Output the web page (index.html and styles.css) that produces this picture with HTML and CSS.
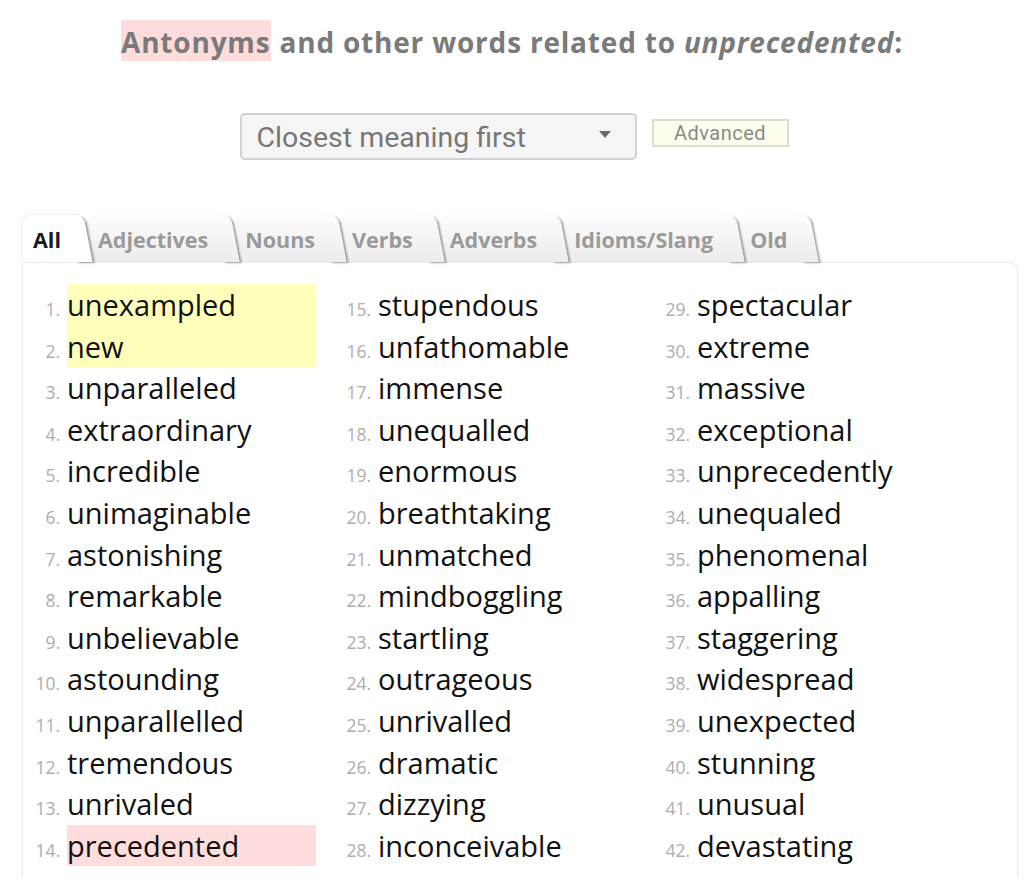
FILE: index.html
```html
<!DOCTYPE html>
<html>
<head>
<meta charset="utf-8">
<link rel="stylesheet" href="styles.css">
</head>
<body>
<h1 class="title"><span class="title-hl">Antonyms</span> and other words related to <em>unprecedented</em>:</h1>

<div class="controls">
  <div class="select">
    <span class="select-text">Closest meaning first</span>
    <span class="select-arrow"></span>
  </div>
  <div class="adv-btn">Advanced</div>
</div>

<div class="tabs">
  <div class="tab active">All</div>
  <div class="tab">Adjectives</div>
  <div class="tab">Nouns</div>
  <div class="tab">Verbs</div>
  <div class="tab">Adverbs</div>
  <div class="tab">Idioms/Slang</div>
  <div class="tab">Old</div>
</div>

<div class="panel">
  <div class="col">
    <div class="item"><span class="num">1.</span><span class="word hl-yellow">unexampled</span></div>
    <div class="item"><span class="num">2.</span><span class="word hl-yellow">new</span></div>
    <div class="item"><span class="num">3.</span><span class="word">unparalleled</span></div>
    <div class="item"><span class="num">4.</span><span class="word">extraordinary</span></div>
    <div class="item"><span class="num">5.</span><span class="word">incredible</span></div>
    <div class="item"><span class="num">6.</span><span class="word">unimaginable</span></div>
    <div class="item"><span class="num">7.</span><span class="word">astonishing</span></div>
    <div class="item"><span class="num">8.</span><span class="word">remarkable</span></div>
    <div class="item"><span class="num">9.</span><span class="word">unbelievable</span></div>
    <div class="item"><span class="num">10.</span><span class="word">astounding</span></div>
    <div class="item"><span class="num">11.</span><span class="word">unparallelled</span></div>
    <div class="item"><span class="num">12.</span><span class="word">tremendous</span></div>
    <div class="item"><span class="num">13.</span><span class="word">unrivaled</span></div>
    <div class="item"><span class="num">14.</span><span class="word hl-pink">precedented</span></div>
  </div>
  <div class="col col2">
    <div class="item"><span class="num">15.</span><span class="word">stupendous</span></div>
    <div class="item"><span class="num">16.</span><span class="word">unfathomable</span></div>
    <div class="item"><span class="num">17.</span><span class="word">immense</span></div>
    <div class="item"><span class="num">18.</span><span class="word">unequalled</span></div>
    <div class="item"><span class="num">19.</span><span class="word">enormous</span></div>
    <div class="item"><span class="num">20.</span><span class="word">breathtaking</span></div>
    <div class="item"><span class="num">21.</span><span class="word">unmatched</span></div>
    <div class="item"><span class="num">22.</span><span class="word">mindboggling</span></div>
    <div class="item"><span class="num">23.</span><span class="word">startling</span></div>
    <div class="item"><span class="num">24.</span><span class="word">outrageous</span></div>
    <div class="item"><span class="num">25.</span><span class="word">unrivalled</span></div>
    <div class="item"><span class="num">26.</span><span class="word">dramatic</span></div>
    <div class="item"><span class="num">27.</span><span class="word">dizzying</span></div>
    <div class="item"><span class="num">28.</span><span class="word">inconceivable</span></div>
  </div>
  <div class="col col3">
    <div class="item"><span class="num">29.</span><span class="word">spectacular</span></div>
    <div class="item"><span class="num">30.</span><span class="word">extreme</span></div>
    <div class="item"><span class="num">31.</span><span class="word">massive</span></div>
    <div class="item"><span class="num">32.</span><span class="word">exceptional</span></div>
    <div class="item"><span class="num">33.</span><span class="word">unprecedently</span></div>
    <div class="item"><span class="num">34.</span><span class="word">unequaled</span></div>
    <div class="item"><span class="num">35.</span><span class="word">phenomenal</span></div>
    <div class="item"><span class="num">36.</span><span class="word">appalling</span></div>
    <div class="item"><span class="num">37.</span><span class="word">staggering</span></div>
    <div class="item"><span class="num">38.</span><span class="word">widespread</span></div>
    <div class="item"><span class="num">39.</span><span class="word">unexpected</span></div>
    <div class="item"><span class="num">40.</span><span class="word">stunning</span></div>
    <div class="item"><span class="num">41.</span><span class="word">unusual</span></div>
    <div class="item"><span class="num">42.</span><span class="word">devastating</span></div>
  </div>
</div>
</body>
</html>
```

FILE: styles.css
```css
html, body {
  margin: 0;
  padding: 0;
  background: #ffffff;
}
body {
  font-family: "Open Sans", "DejaVu Sans", sans-serif;
  width: 1024px;
  height: 877px;
  overflow: hidden;
}

.title {
  margin: 0;
  padding-top: 20px;
  height: 41px;
  line-height: 43px;
  text-align: center;
  font-size: 28px;
  font-weight: 700;
  color: #7a7a7a;
  letter-spacing: 0.8px;
}
.title em {
  font-style: italic;
}
.title-hl {
  background: #ffdcdc;
  padding: 0 1px 0 0;
  display: inline-block;
  height: 41px;
  line-height: 45px;
}

.controls {
  display: flex;
  justify-content: center;
  align-items: flex-start;
  gap: 15px;
  margin-top: 52px;
  padding-left: 4px;
}
.select {
  box-sizing: border-box;
  width: 397px;
  height: 47px;
  border: 2px solid #d2d2d2;
  border-radius: 5px;
  background: #f5f5f5;
  display: flex;
  align-items: center;
  justify-content: space-between;
  padding: 0 24px 0 15px;
}
.select-text {
  font-family: Roboto, "Liberation Sans", sans-serif;
  font-size: 28.5px;
  color: #777777;
  margin-top: 2px;
}
.select-arrow {
  width: 0;
  height: 0;
  border-left: 6px solid transparent;
  border-right: 6px solid transparent;
  border-top: 7px solid #6a6a6a;
  margin-bottom: 4px;
}
.adv-btn {
  box-sizing: border-box;
  margin-top: 6px;
  width: 137px;
  height: 28px;
  border: 2px solid #dcdfd0;
  background: #fefeee;
  font-family: Roboto, "Liberation Sans", sans-serif;
  font-size: 20px;
  letter-spacing: 0.5px;
  line-height: 24px;
  color: #8a8a8a;
  text-align: center;
}

.tabs {
  display: flex;
  margin-top: 55px;
  margin-left: 22px;
  height: 47px;
  position: relative;
  z-index: 2;
}
.tab {
  position: relative;
  height: 47px;
  line-height: 50px;
  font-size: 21.5px;
  font-weight: 700;
  color: #9a9a9a;
  padding: 0 32px 0 12px;
  margin-right: -7px;
  isolation: isolate;
}
.tab::before {
  content: "";
  position: absolute;
  top: 0;
  bottom: 0;
  left: 0;
  right: 12px;
  background: linear-gradient(#fcfcfc, #ececec);
  border-radius: 9px 0 0 0;
  z-index: -1;
}
.tab::after {
  content: "";
  position: absolute;
  top: 0;
  bottom: 0;
  right: 5px;
  width: 16px;
  background: linear-gradient(#fcfcfc, #ececec);
  border-radius: 0 8px 0 0;
  transform: skewX(11deg);
  box-shadow: 2px 1px 2px rgba(0, 0, 0, 0.35);
  z-index: -2;
}
.tab.active {
  color: #1a1a1a;
  padding-left: 11px;
}
.tab.active::before,
.tab.active::after {
  background: #ffffff;
}
.tab.active::before {
  box-shadow: -1px -1px 1px rgba(0, 0, 0, 0.06);
}
.tab:nth-child(1) { z-index: 7; }
.tab:nth-child(2) { z-index: 6; }
.tab:nth-child(3) { z-index: 5; }
.tab:nth-child(4) { z-index: 4; }
.tab:nth-child(5) { z-index: 3; }
.tab:nth-child(6) { z-index: 2; }
.tab:nth-child(7) { z-index: 1; }

.panel {
  position: relative;
  z-index: 1;
  box-sizing: border-box;
  margin-left: 22px;
  width: 996px;
  height: 700px;
  border: 1px solid #ececec;
  border-radius: 0 9px 0 0;
  box-shadow: 0 0 3px rgba(0, 0, 0, 0.08);
  background: #ffffff;
  display: grid;
  grid-template-columns: 311px 319px 1fr;
  padding-top: 21px;
}
.col {
  display: flex;
  flex-direction: column;
}
.item {
  display: flex;
  align-items: baseline;
  height: 41.6px;
}
.num {
  width: 38px;
  text-align: right;
  font-size: 17.5px;
  color: #adadad;
  margin-right: 7px;
  flex: none;
  margin-left: -1px;
}
.word {
  width: 249px;
  font-size: 29px;
  line-height: 41.6px;
  color: #111111;
}
.hl-yellow {
  background: #ffffbb;
}
.hl-pink {
  background: #ffdddd;
}
```
